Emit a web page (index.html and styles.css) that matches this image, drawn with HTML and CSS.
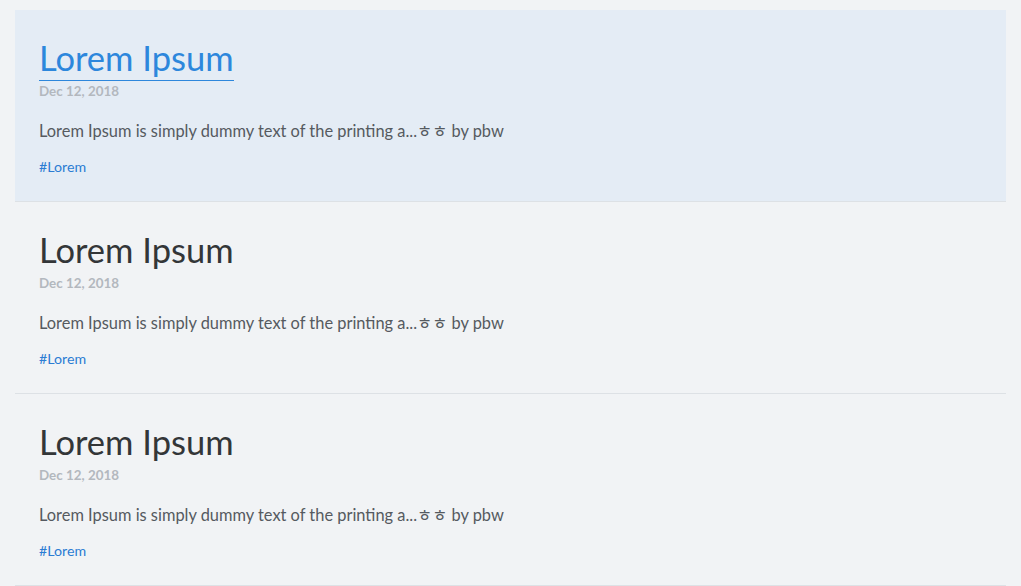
FILE: index.html
```html
<!DOCTYPE html>
<html lang="ko">
<head>
<meta charset="utf-8">
<title>Posts</title>
<link rel="stylesheet" href="styles.css">
</head>
<body>
<main class="post-list">
  <article class="post post--active">
    <h2 class="post-title"><a href="#" class="post-link">Lorem Ipsum</a></h2>
    <div class="post-date">Dec 12, 2018</div>
    <p class="post-excerpt">Lorem Ipsum is simply dummy text of the printing a...ㅎㅎ by pbw</p>
    <div class="post-tags"><a href="#" class="tag">#Lorem</a></div>
  </article>
  <article class="post">
    <h2 class="post-title"><a href="#" class="post-link">Lorem Ipsum</a></h2>
    <div class="post-date">Dec 12, 2018</div>
    <p class="post-excerpt">Lorem Ipsum is simply dummy text of the printing a...ㅎㅎ by pbw</p>
    <div class="post-tags"><a href="#" class="tag">#Lorem</a></div>
  </article>
  <article class="post">
    <h2 class="post-title"><a href="#" class="post-link">Lorem Ipsum</a></h2>
    <div class="post-date">Dec 12, 2018</div>
    <p class="post-excerpt">Lorem Ipsum is simply dummy text of the printing a...ㅎㅎ by pbw</p>
    <div class="post-tags"><a href="#" class="tag">#Lorem</a></div>
  </article>
</main>
</body>
</html>
```
FILE: styles.css
```css
html, body {
  margin: 0;
  padding: 0;
  background: #f1f3f5;
}
body {
  font-family: Lato, "Noto Sans CJK KR", sans-serif;
  padding: 10px 15px 0;
}
.post-list {
  display: flex;
  flex-direction: column;
}
.post {
  padding: 26px 24px 24px;
  border-bottom: 1px solid #dde1e5;
  display: flex;
  flex-direction: column;
  align-items: flex-start;
}
.post--active {
  background: #e4ecf5;
}
.post-title {
  margin: 0;
  font-size: 34.5px;
  font-weight: 400;
  line-height: 44px;
}
.post-link {
  display: block;
  color: #333638;
  text-decoration: none;
  border-bottom: 1px solid transparent;
}
.post--active .post-link {
  color: #2d87dc;
  border-bottom-color: #2d87dc;
}
.post-date {
  font-size: 13.4px;
  line-height: 20px;
  font-weight: 700;
  color: #b3b8be;
}
.post-excerpt {
  margin: 18px 0 0;
  font-size: 16.4px;
  line-height: 24px;
  color: #555a60;
}
.post-tags {
  margin-top: 14px;
  font-size: 14.2px;
  line-height: 20px;
}
.tag {
  color: #2b7cd3;
  text-decoration: none;
}
```
